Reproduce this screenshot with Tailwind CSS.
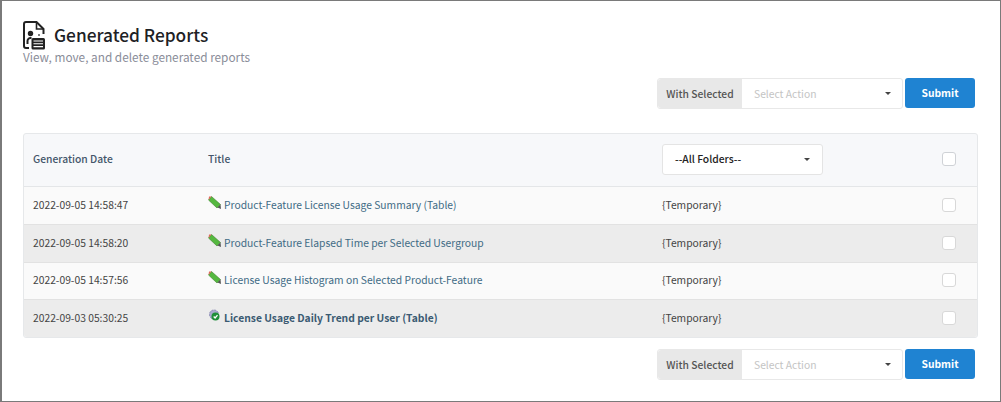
<!doctype html>
<html lang="en">
  <head>
    <meta charset="UTF-8" />
    <meta name="viewport" content="width=device-width, initial-scale=1" />
    <title>Generated Reports</title>
    <script src="https://cdn.jsdelivr.net/npm/@tailwindcss/browser@4"></script>
  </head>
  <body class="bg-white font-['Noto_Sans_CJK_SC','Source_Sans_Pro',sans-serif]">
    <div class="h-[402px] w-[1001px] overflow-hidden border border-l-2 border-[#7a7a7a] pl-[21px] pr-[23px] pt-[20px]">
      <header class="flex items-start gap-[9px] h-[30px]">
        <svg class="w-[22px] h-[29px] shrink-0" viewBox="0 0 22 29" fill="none">
          <path d="M6 27H3A2 2 0 0 1 1 25V3A2 2 0 0 1 3 1H13.500L20.500 8V13" stroke="#222" stroke-width="2"/>
          <path d="M13.500 1V8H20.500" stroke="#222" stroke-width="1.600"/>
          <circle cx="7.500" cy="12.500" r="2.700" fill="#222"/>
          <circle cx="16" cy="14" r="1" fill="#555"/>
          <path d="M4.500 23v-3a3 3 0 0 1 3-3h1" stroke="#222" stroke-width="2"/>
          <rect x="8.500" y="17" width="13.500" height="11.500" rx="1.500" fill="#222"/>
          <path d="M10.500 20h9.500M10.500 22.800h9.500M10.500 25.600h9.500" stroke="#fff" stroke-width="1.100"/>
        </svg>
        <h1 class="text-[17.300px] leading-[30px] font-medium text-[#1d2125] -mt-px">Generated Reports</h1>
      </header>
      <p class="text-[11.800px] leading-[14px] text-[#8a8d99] -mt-px">View, move, and delete generated reports</p>

      <div class="flex justify-end items-start gap-[2px] mt-[14px] pr-[2px]">
        <div class="flex h-[31px] w-[246px] rounded-[3px] border border-[#e8e8e8] text-[10.300px]">
          <span class="flex items-center justify-center w-[84px] bg-[#e8e8e8] text-[#555] font-medium rounded-l-[3px]">With Selected</span>
          <span class="flex flex-1 items-center justify-between pl-[12px] pr-[11px] text-[#c4c4c4]">Select Action<i class="w-0 h-0 border-x-[3px] border-t-[3px] border-x-transparent border-t-[#444]"></i></span>
        </div>
        <button class="h-[30px] w-[70px] rounded-[3px] bg-[#1f83d2] text-white text-[10.300px] font-bold">Submit</button>
      </div>

      <div class="mt-[24px] w-[955px] rounded-[3px] border border-[#e6e8ea] bg-[#f7f8fa] text-[10.300px]">
        <div class="grid grid-cols-[175px_454px_280px_1fr] items-center h-[53px] pb-[2px] border-b border-[#e4e6e8] pl-[9px] font-medium text-[#44566a]">
          <span>Generation Date</span>
          <span>Title</span>
          <span class="flex items-center justify-between h-[31px] w-[161px] rounded-[3px] border border-[#e4e4e4] bg-white pl-[12px] pr-[12px] text-[#222]">--All Folders--<i class="w-0 h-0 border-x-[3px] border-t-[3px] border-x-transparent border-t-[#444]"></i></span>
          <span class="w-[14px] h-[14px] rounded-[3px] border border-[#cfd2d6] bg-white"></span>
        </div>

        <div class="grid grid-cols-[175px_454px_280px_1fr] items-center h-[38px] pb-[2px] pl-[9px] bg-[#fafafa] text-[#444] border-b border-[#e2e2e2]">
          <span>2022-09-05 14:58:47</span>
          <span class="flex items-center gap-[3px] text-[#3f6b85]">
            <svg class="w-[13px] h-[13px] shrink-0 -mt-[5px]" viewBox="0 0 13 13"><path d="M3.500 .5 12.500 8.500 9 12 .5 4Z" fill="#55b83f" stroke="#3c7d2c" stroke-width=".6"/><path d="M.5 4 3.500 .5 1 .5Z" fill="#e0695a"/><path d="M9.500 11.500 12.500 8.500 13 13Z" fill="#555"/></svg>
            Product-Feature License Usage Summary (Table)
          </span>
          <span>{Temporary}</span>
          <span class="w-[14px] h-[14px] rounded-[3px] border border-[#d8d8d8] bg-white"></span>
        </div>
        <div class="grid grid-cols-[175px_454px_280px_1fr] items-center h-[38px] pb-[2px] pl-[9px] bg-[#ececec] text-[#444] border-b border-[#e2e2e2]">
          <span>2022-09-05 14:58:20</span>
          <span class="flex items-center gap-[3px] text-[#3f6b85]">
            <svg class="w-[13px] h-[13px] shrink-0 -mt-[5px]" viewBox="0 0 13 13"><path d="M3.500 .5 12.500 8.500 9 12 .5 4Z" fill="#55b83f" stroke="#3c7d2c" stroke-width=".6"/><path d="M.5 4 3.500 .5 1 .5Z" fill="#e0695a"/><path d="M9.500 11.500 12.500 8.500 13 13Z" fill="#555"/></svg>
            Product-Feature Elapsed Time per Selected Usergroup
          </span>
          <span>{Temporary}</span>
          <span class="w-[14px] h-[14px] rounded-[3px] border border-[#d8d8d8] bg-white"></span>
        </div>
        <div class="grid grid-cols-[175px_454px_280px_1fr] items-center h-[37px] pb-[2px] pl-[9px] bg-[#fafafa] text-[#444] border-b border-[#e2e2e2]">
          <span>2022-09-05 14:57:56</span>
          <span class="flex items-center gap-[3px] text-[#3f6b85]">
            <svg class="w-[13px] h-[13px] shrink-0 -mt-[5px]" viewBox="0 0 13 13"><path d="M3.500 .5 12.500 8.500 9 12 .5 4Z" fill="#55b83f" stroke="#3c7d2c" stroke-width=".6"/><path d="M.5 4 3.500 .5 1 .5Z" fill="#e0695a"/><path d="M9.500 11.500 12.500 8.500 13 13Z" fill="#555"/></svg>
            License Usage Histogram on Selected Product-Feature
          </span>
          <span>{Temporary}</span>
          <span class="w-[14px] h-[14px] rounded-[3px] border border-[#d8d8d8] bg-white"></span>
        </div>
        <div class="grid grid-cols-[175px_454px_280px_1fr] items-center h-[37px] pb-[1px] pl-[9px] bg-[#ececec] text-[#444] rounded-b-[3px]">
          <span>2022-09-03 05:30:25</span>
          <span class="flex items-center gap-[3px] text-[#3a5a72] font-bold">
            <svg class="w-[13px] h-[13px] shrink-0 -mt-[5px]" viewBox="0 0 13 13"><circle cx="6" cy="5.500" r="4.500" fill="#a9a9cf" stroke="#8787b0" stroke-dasharray="2 1"/><circle cx="7.500" cy="7.500" r="4" fill="#1f8f3a"/><path d="M5.700 7.500 7.100 9 9.500 6.200" stroke="#fff" stroke-width="1.300" fill="none"/></svg>
            License Usage Daily Trend per User (Table)
          </span>
          <span>{Temporary}</span>
          <span class="w-[14px] h-[14px] rounded-[3px] border border-[#d8d8d8] bg-white"></span>
        </div>
      </div>

      <div class="flex justify-end items-start gap-[2px] mt-[11px] pr-[2px]">
        <div class="flex h-[31px] w-[246px] rounded-[3px] border border-[#e8e8e8] text-[10.300px]">
          <span class="flex items-center justify-center w-[84px] bg-[#e8e8e8] text-[#555] font-medium rounded-l-[3px]">With Selected</span>
          <span class="flex flex-1 items-center justify-between pl-[12px] pr-[11px] text-[#c4c4c4]">Select Action<i class="w-0 h-0 border-x-[3px] border-t-[3px] border-x-transparent border-t-[#444]"></i></span>
        </div>
        <button class="h-[30px] w-[70px] rounded-[3px] bg-[#1f83d2] text-white text-[10.300px] font-bold">Submit</button>
      </div>
    </div>
  </body>
</html>
